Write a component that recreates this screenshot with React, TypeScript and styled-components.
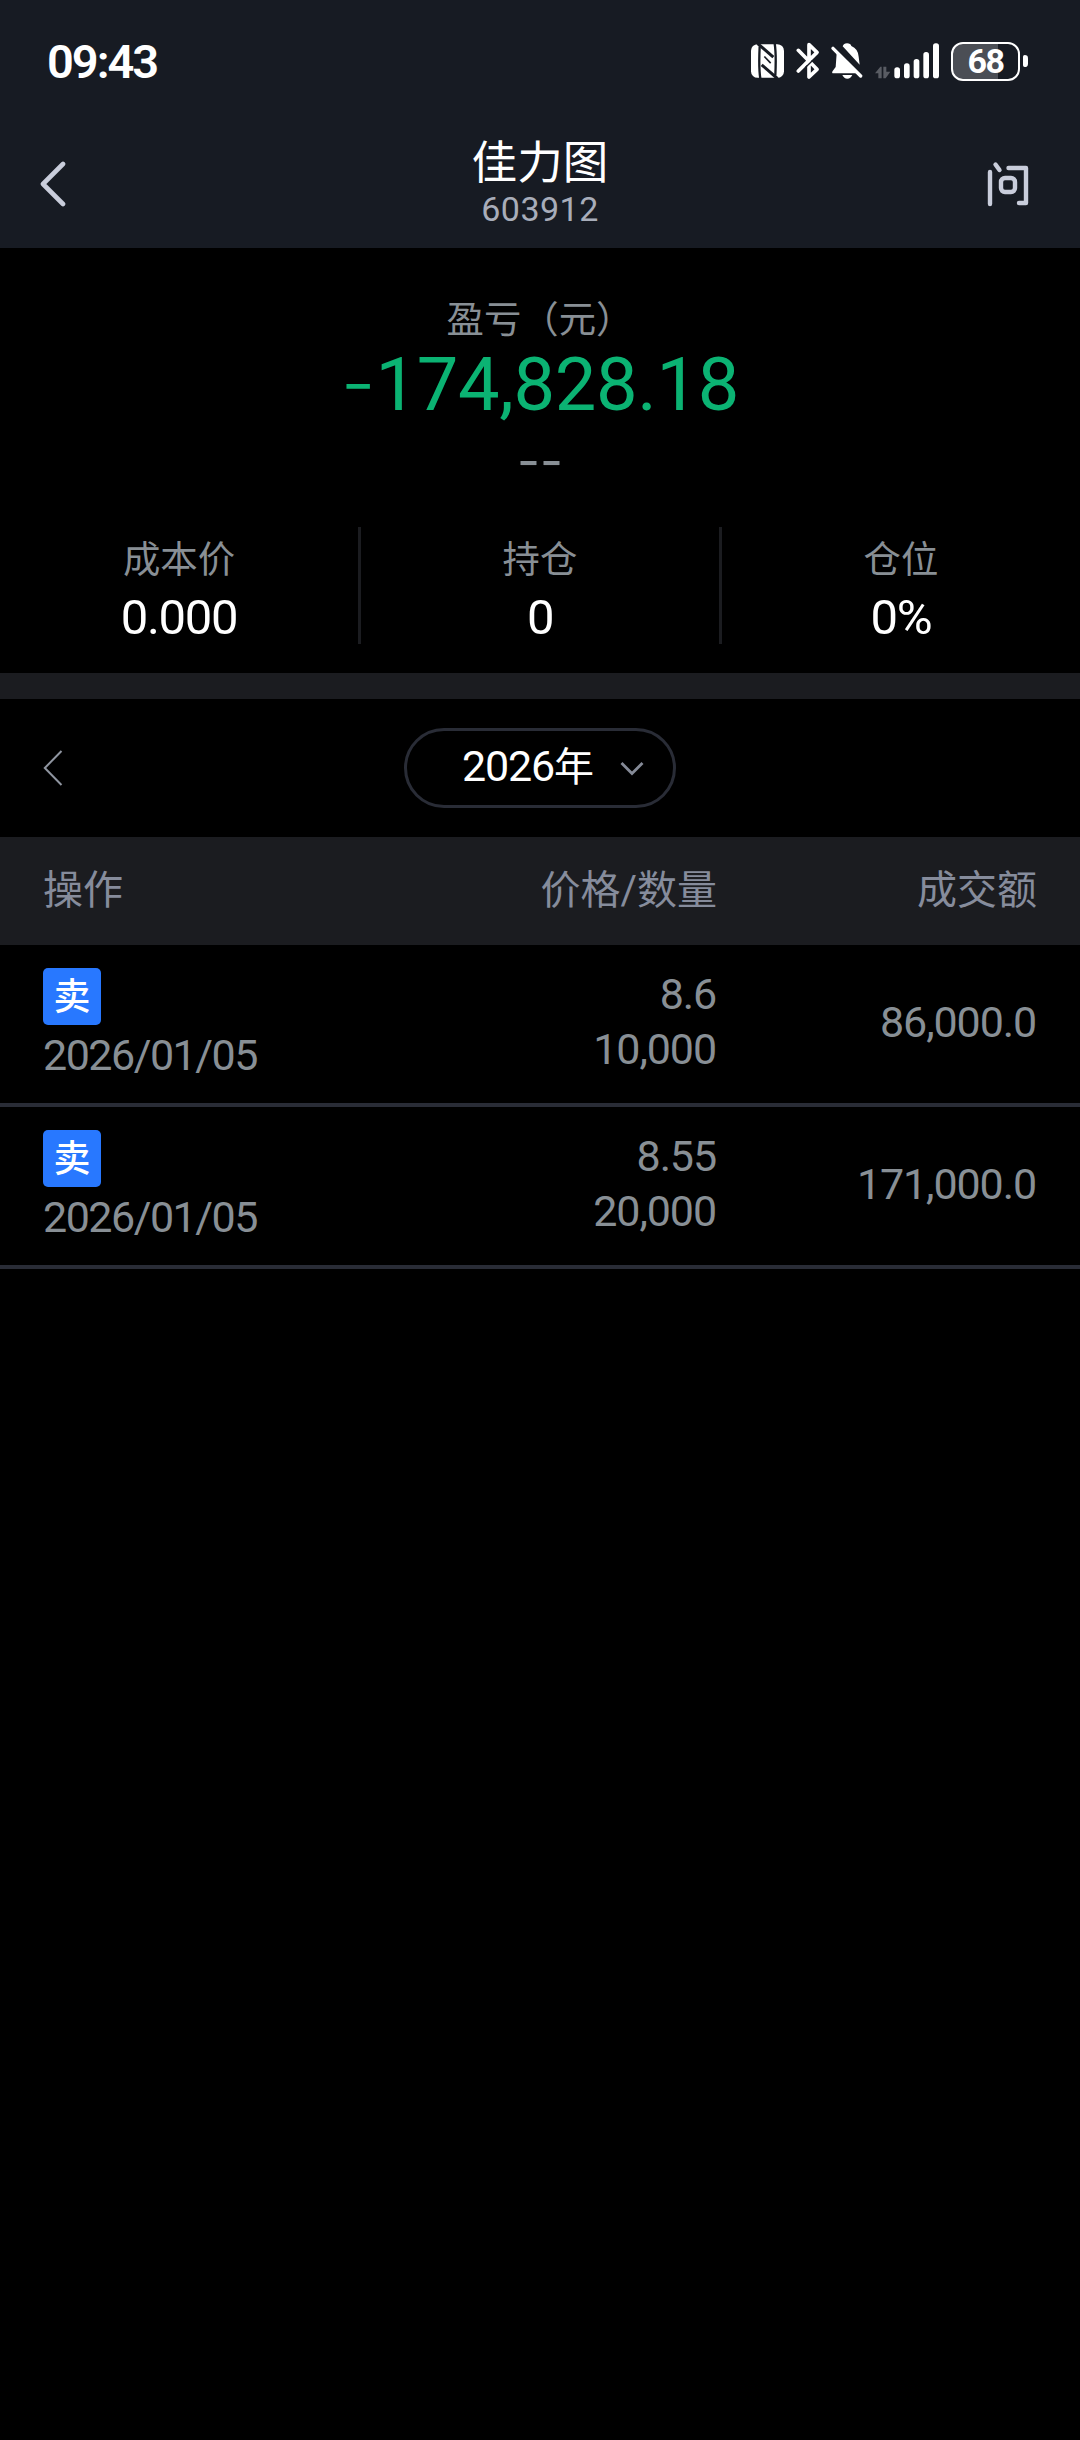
import React from 'react';
import styled, { createGlobalStyle } from 'styled-components';

const colors = {
  header: '#171b23',
  band: '#1b1c20',
  line: '#292c36',
  muted: '#888f95',
  columnTitle: '#868c9c',
  icon: '#c9cddb',
  green: '#0bb373',
  blue: '#2878ff',
};

const GlobalStyle = createGlobalStyle`
  *, *::before, *::after { box-sizing: border-box; }
  body {
    margin: 0;
    background: #000;
    color: #fff;
    font-family: Roboto, "Noto Sans CJK SC", sans-serif;
  }
`;

const Screen = styled.main`
  display: flex;
  flex-direction: column;
  width: 1080px;
  height: 2440px;
  overflow: hidden;
  background: #000;
`;

const StatusBar = styled.div`
  display: flex;
  align-items: center;
  justify-content: space-between;
  height: 122px;
  padding: 0 52px 0 47px;
  background: ${colors.header};
`;

const Clock = styled.span`
  padding-top: 2px;
  font-size: 47px;
  line-height: 56px;
  font-weight: 600;
  letter-spacing: -2px;
`;

const StatusIcons = styled.div`
  display: flex;
  align-items: center;
  height: 40px;
`;

const Glyph = styled.svg<{ $w: number; $h: number; $ml?: number }>`
  display: block;
  flex: none;
  width: ${(p) => p.$w}px;
  height: ${(p) => p.$h}px;
  margin-left: ${(p) => p.$ml ?? 0}px;
`;

const Battery = styled.div`
  display: flex;
  align-items: center;
  justify-content: center;
  width: 69px;
  height: 39px;
  margin-left: 12px;
  border: 2.5px solid #fff;
  border-radius: 12px;
  background: linear-gradient(to right, #4b4e55 0 45px, transparent 45px);
  font-size: 34px;
  line-height: 34px;
  font-weight: 700;
  letter-spacing: -1.5px;
`;

const BatteryTip = styled.i`
  width: 5px;
  height: 12px;
  margin-left: 3px;
  border-radius: 2px 4px 4px 2px;
  background: #fff;
`;

const NavBar = styled.header`
  display: grid;
  grid-template-columns: 200px 1fr 200px;
  height: 126px;
  padding: 0 50px 0 40px;
  background: ${colors.header};
`;

const NavButton = styled.button<{ $right?: boolean }>`
  display: flex;
  justify-content: ${(p) => (p.$right ? 'flex-end' : 'flex-start')};
  align-items: flex-start;
  padding: 39px 0 0;
  border: 0;
  background: none;
`;

const NavTitle = styled.div`
  display: flex;
  flex-direction: column;
  align-items: center;
  padding: 16px 0 0 10px;
`;

const StockName = styled.h1`
  margin: 0;
  font-size: 45.6px;
  line-height: 52px;
  font-weight: 400;
`;

const StockCode = styled.span`
  color: #a8adba;
  font-size: 34px;
  line-height: 38px;
  letter-spacing: 0.5px;
`;

const Summary = styled.section`
  display: flex;
  flex-direction: column;
  align-items: center;
  height: 425px;
  padding-top: 50px;
`;

const Label = styled.span`
  color: ${colors.muted};
  font-size: 37.4px;
  line-height: 44px;
`;

const Profit = styled.strong`
  margin-top: 3px;
  color: ${colors.green};
  font-size: 74px;
  line-height: 80px;
  font-weight: 400;
  letter-spacing: -0.3px;
`;

const Minus = styled.span`
  font-family: Inter, sans-serif;
  font-size: 77px;
  font-weight: 300;
  line-height: 0;
`;

const Rate = styled.span`
  margin-top: 16px;
  color: ${colors.muted};
  font-family: Inter, sans-serif;
  font-size: 50px;
  font-weight: 400;
  line-height: 40px;
`;

const Stats = styled.div`
  display: flex;
  width: 100%;
  height: 117px;
  margin-top: 46px;
`;

const Stat = styled.div`
  display: flex;
  flex: 1;
  flex-direction: column;
  align-items: center;
  padding-top: 11px;

  & + & {
    border-left: 3px solid ${colors.band};
  }
`;

const StatValue = styled.span`
  margin-top: 8px;
  font-size: 49px;
  line-height: 56px;
  letter-spacing: -1.3px;
`;

const Divider = styled.div`
  height: 26px;
  background: ${colors.band};
`;

const YearBar = styled.div`
  display: grid;
  grid-template-columns: 1fr 272px 1fr;
  align-items: center;
  height: 138px;
  padding: 0 43px;
`;

const YearPill = styled.button`
  display: flex;
  align-items: center;
  height: 80px;
  padding: 0 0 0 55px;
  border: 3px solid ${colors.line};
  border-radius: 40px;
  background: none;
  color: #fff;
  font-family: inherit;
  font-size: 43px;
  line-height: 48px;
  letter-spacing: -1.2px;
`;

const YearText = styled.span`
  padding-bottom: 2px;
`;

const YearUnit = styled.span`
  font-size: 40px;
  letter-spacing: 0;
`;

const Columns = styled.div`
  display: grid;
  grid-template-columns: 1fr 1fr 320px;
  padding: 0 43px;
`;

const TableHead = styled(Columns)`
  align-items: center;
  height: 108px;
  padding-bottom: 1px;
  background: ${colors.band};
  color: ${colors.columnTitle};
  font-size: 40px;
  line-height: 48px;
`;

const TradeRow = styled(Columns)`
  height: 162px;
  border-bottom: 4px solid ${colors.line};
  color: ${colors.muted};
  font-size: 43px;
  line-height: 55px;
  letter-spacing: -1.1px;
`;

const HeadCell = styled.span<{ $right?: boolean }>`
  text-align: ${(p) => (p.$right ? 'right' : 'left')};
`;

const ActionCell = styled.div`
  display: flex;
  flex-direction: column;
  align-items: flex-start;
  padding-top: 23px;
`;

const SellBadge = styled.span`
  display: flex;
  align-items: center;
  justify-content: center;
  width: 58px;
  height: 57px;
  padding-top: 2px;
  border-radius: 5px;
  background: ${colors.blue};
  color: #fff;
  font-size: 37px;
  line-height: 55px;
  font-weight: 500;
  letter-spacing: 0;
`;

const TradeDate = styled.span`
  margin-top: 3px;
  letter-spacing: -1.5px;
`;

const PriceCell = styled.div`
  display: flex;
  flex-direction: column;
  align-items: flex-end;
  padding: 22px 1px 0 0;
`;

const AmountCell = styled.div`
  align-self: center;
  padding: 0 1px 4px 0;
  text-align: right;
`;

const NfcIcon = () => (
  <Glyph $w={33} $h={34} viewBox="93 71 99 101">
    <rect x="93" y="71" width="99" height="101" rx="20" fill="#fff" />
    <g fill="none" stroke={colors.header} strokeWidth="7">
      <path d="M113 69 L160 110" strokeWidth="9" />
      <path d="M172 174 L125 133" strokeWidth="9" />
      <path d="M121 174 C117 150 117 120 119 78" />
      <path d="M164 69 C168 93 168 123 166 165" />
      <path d="M133 108 L152 128" strokeWidth="5" />
    </g>
  </Glyph>
);

const BluetoothIcon = () => (
  <Glyph $w={24} $h={38} $ml={12} viewBox="227 65 72 114">
    <path
      d="M234 90 L290 147 L266 170 V73 L290 96 L234 152"
      fill="none"
      stroke="#fff"
      strokeWidth="11"
      strokeLinecap="round"
      strokeLinejoin="round"
    />
    <path d="M256 141 L276 121" stroke={colors.header} strokeWidth="4" />
  </Glyph>
);

const MutedBellIcon = () => (
  <Glyph $w={32} $h={37} $ml={11} viewBox="332 67 96 111">
    <path
      d="M367 77 Q370 68 380 68 Q391 68 393 76 Q413 84 415 108 L418 132 Z"
      fill="#fff"
    />
    <path d="M349 98 L409 158 H339 Q333 158 337 151 L346 139 Z" fill="#fff" />
    <path d="M366 163 H396 Q391 174 381 174 Q371 174 366 163 Z" fill="#fff" />
    <path d="M338 83 L421 166" stroke="#fff" strokeWidth="10" strokeLinecap="round" />
  </Glyph>
);

const SignalIcon = () => (
  <Glyph $w={64} $h={36} $ml={12} viewBox="464 68 192 108">
    <g fill="#595c63">
      <path d="M474 174 V159 H464 L480 139 H484 V174 Z" />
      <path d="M489 139 H498 V154 H510 L496 174 H489 Z" />
    </g>
    <g fill="#fff">
      <rect x="522" y="141" width="17" height="33" rx="8" />
      <rect x="551" y="129" width="17" height="45" rx="8" />
      <rect x="580" y="116" width="17" height="58" rx="8" />
      <rect x="609" y="95" width="17" height="79" rx="8" />
      <rect x="638" y="69" width="18" height="105" rx="8" />
    </g>
  </Glyph>
);

const BackIcon = () => (
  <Glyph $w={26} $h={46} viewBox="0 0 26 46" aria-label="返回">
    <path
      d="M23 3 L3 23 L23 43"
      fill="none"
      stroke={colors.icon}
      strokeWidth="4.6"
      strokeLinecap="round"
      strokeLinejoin="round"
    />
  </Glyph>
);

const AskIcon = () => (
  <Glyph $w={43} $h={46} viewBox="0 0 43 46" aria-label="提问">
    <g
      fill="none"
      stroke={colors.icon}
      strokeWidth="4.4"
      strokeLinecap="round"
      strokeLinejoin="round"
    >
      <line x1="3" y1="11" x2="3" y2="43" />
      <line x1="8.5" y1="3.5" x2="12.5" y2="9" />
      <polyline points="21.5,7 39,7 39,42 32,42" />
      <rect x="14" y="17" width="14" height="14" rx="4" />
    </g>
  </Glyph>
);

const PreviousIcon = () => (
  <Glyph $w={20} $h={36} viewBox="0 0 20 36">
    <path d="M18.5 1 L1.8 18 L18.5 35" fill="none" stroke="#8f95a0" strokeWidth="2" />
  </Glyph>
);

const ChevronDownIcon = () => (
  <Glyph $w={24} $h={16} $ml={26} viewBox="0 0 24 16">
    <path d="M1.5 3 L12 13.5 L22.5 3" fill="none" stroke="#858a97" strokeWidth="2.8" />
  </Glyph>
);

const stats = [
  { label: '成本价', value: '0.000' },
  { label: '持仓', value: '0' },
  { label: '仓位', value: '0%' },
];

const trades = [
  { date: '2026/01/05', price: '8.6', quantity: '10,000', amount: '86,000.0' },
  { date: '2026/01/05', price: '8.55', quantity: '20,000', amount: '171,000.0' },
];

export default function App() {
  return (
    <Screen>
      <GlobalStyle />
      <StatusBar>
        <Clock>09:43</Clock>
        <StatusIcons>
          <NfcIcon />
          <BluetoothIcon />
          <MutedBellIcon />
          <SignalIcon />
          <Battery>68</Battery>
          <BatteryTip />
        </StatusIcons>
      </StatusBar>

      <NavBar>
        <NavButton>
          <BackIcon />
        </NavButton>
        <NavTitle>
          <StockName>佳力图</StockName>
          <StockCode>603912</StockCode>
        </NavTitle>
        <NavButton $right>
          <AskIcon />
        </NavButton>
      </NavBar>

      <Summary>
        <Label>盈亏（元）</Label>
        <Profit>
          <Minus>-</Minus>174,828.18
        </Profit>
        <Rate>--</Rate>
        <Stats>
          {stats.map((stat) => (
            <Stat key={stat.label}>
              <Label>{stat.label}</Label>
              <StatValue>{stat.value}</StatValue>
            </Stat>
          ))}
        </Stats>
      </Summary>

      <Divider />

      <YearBar>
        <PreviousIcon />
        <YearPill>
          <YearText>
            2026<YearUnit>年</YearUnit>
          </YearText>
          <ChevronDownIcon />
        </YearPill>
      </YearBar>

      <TableHead>
        <HeadCell>操作</HeadCell>
        <HeadCell $right>价格/数量</HeadCell>
        <HeadCell $right>成交额</HeadCell>
      </TableHead>

      {trades.map((trade) => (
        <TradeRow key={trade.quantity}>
          <ActionCell>
            <SellBadge>卖</SellBadge>
            <TradeDate>{trade.date}</TradeDate>
          </ActionCell>
          <PriceCell>
            <span>{trade.price}</span>
            <span>{trade.quantity}</span>
          </PriceCell>
          <AmountCell>{trade.amount}</AmountCell>
        </TradeRow>
      ))}
    </Screen>
  );
}
